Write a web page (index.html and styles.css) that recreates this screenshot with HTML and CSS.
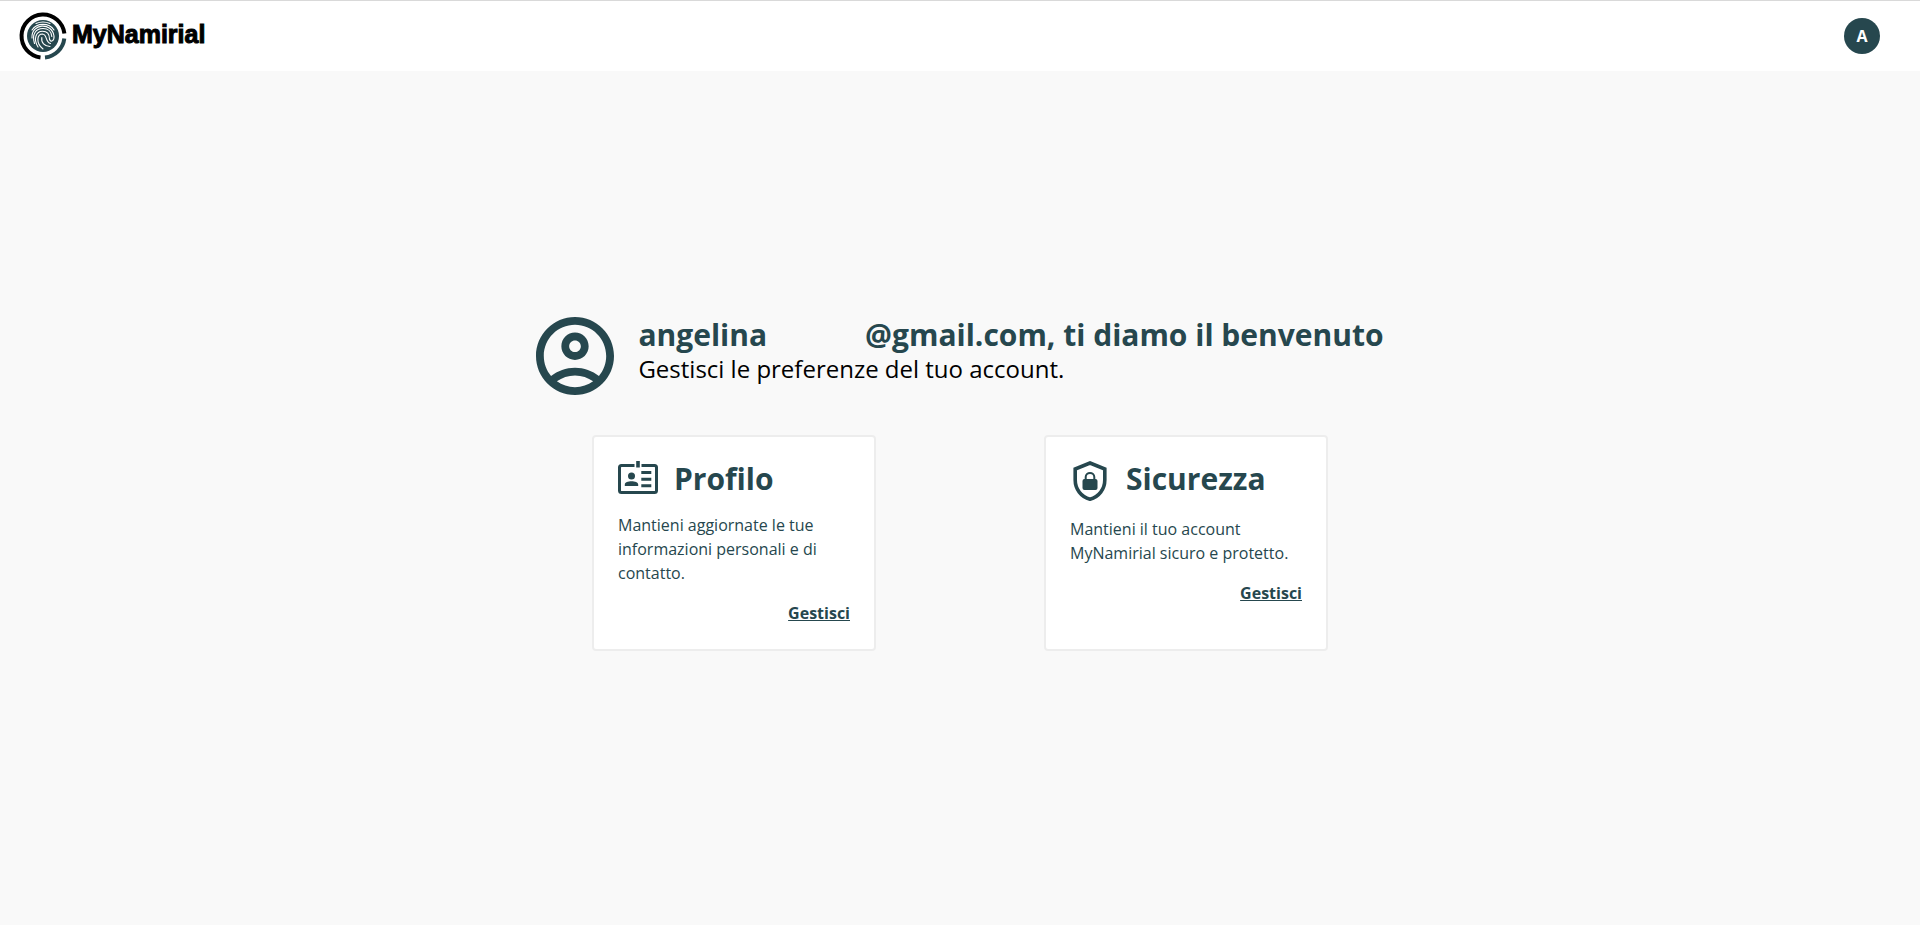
FILE: index.html
```
<!DOCTYPE html>
<html lang="it">
<head>
<meta charset="UTF-8">
<meta name="viewport" content="width=device-width, initial-scale=1">
<title>MyNamirial</title>
<link rel="stylesheet" href="styles.css">
</head>
<body>

<header class="header">
    <a class="logo" href="#">
        <svg class="logo-icon" viewBox="0 0 48 48" fill="none" aria-hidden="true">
            <path d="M21.5 45.4A21.5 21.5 0 1 1 45.4 21.6" stroke="#000" stroke-width="4"/>
            <path d="M45.3 26.5A21.5 21.5 0 0 1 26 45.4" stroke="#26474e" stroke-width="4"/>
            <circle cx="24" cy="24" r="16" fill="#26474e"/>
            <g stroke="#fff" stroke-width="1.1" stroke-linecap="round">
                <path d="M17 11.500Q24 8.500 31 11.500"/>
                <path d="M13 18C18 10.500 30 10.500 35 18"/>
                <path d="M13 26C12 11 33 10 35 24C35.500 29 31.500 31 30.500 27"/>
                <path d="M15.500 31.500C12.500 22 17 16.500 24 16.500C29 16.500 32.500 19.500 32.800 24.500"/>
                <path d="M19 35C14 27 17 19.200 23.500 19.200C28 19.200 30.500 22 30.500 27"/>
                <path d="M24 37C16.500 31 18 22 23.500 22C28.500 22.500 26 30 31.500 31.500"/>
                <path d="M22.800 25.500C22 30.500 25.500 34.500 31 34.500"/>
            </g>
        </svg>
        <span class="logo-text">MyNamirial</span>
    </a>
    <button class="avatar" type="button" aria-label="Account">A</button>
</header>

<main class="main">
    <section class="welcome">
        <svg class="welcome-icon" viewBox="2 2 20 20" fill="#26474e" aria-hidden="true">
            <path d="M12 2C6.480 2 2 6.480 2 12s4.480 10 10 10 10-4.480 10-10S17.520 2 12 2zM7.350 18.500C8.660 17.560 10.260 17 12 17s3.340.56 4.650 1.500C15.340 19.440 13.740 20 12 20s-3.340-.56-4.650-1.500zM18.140 17.120C16.450 15.800 14.320 15 12 15s-4.450.8-6.140 2.120C4.700 15.730 4 13.950 4 12c0-4.420 3.580-8 8-8s8 3.580 8 8c0 1.950-.7 3.730-1.860 5.120z"/>
            <path d="M12 6c-1.930 0-3.500 1.570-3.500 3.500S10.070 13 12 13s3.500-1.570 3.500-3.500S13.930 6 12 6zm0 5c-.83 0-1.500-.67-1.500-1.500S11.170 8 12 8s1.500.67 1.500 1.500S12.830 11 12 11z"/>
        </svg>
        <div class="welcome-text">
            <h1>angelina<span class="blank"></span>@gmail.com, ti diamo il benvenuto</h1>
            <p>Gestisci le preferenze del tuo account.</p>
        </div>
    </section>

    <section class="cards">
        <article class="card">
            <div class="card-title">
                <svg class="icon-badge" viewBox="0 0 40 33" aria-hidden="true">
                    <path d="M16.500 4.500H3.500Q1.500 4.500 1.500 6.500V29.500Q1.500 31.500 3.500 31.500H36.500Q38.500 31.500 38.500 29.500V6.500Q38.500 4.500 36.500 4.500H23.500" fill="none" stroke="#26474e" stroke-width="3"/>
                    <path d="M18.200 0h3.600v6.500h-3.600zM23.300 10h10v3h-10zM23.300 16.700h10v3h-10zM23.300 23.300h10v3h-10zM6.800 25V23.500C6.800 19.200 20.200 19.200 20.200 23.500V25z" fill="#26474e"/>
                    <circle cx="13.500" cy="15" r="3.500" fill="#26474e"/>
                </svg>
                <h2>Profilo</h2>
            </div>
            <p>Mantieni aggiornate le tue informazioni personali e di contatto.</p>
            <a class="manage" href="#">Gestisci</a>
        </article>

        <article class="card">
            <div class="card-title">
                <svg class="icon-shield" viewBox="0 0 40 40" aria-hidden="true">
                    <path d="M20 2L34.800 8V19C34.800 28 29 35.800 20 38.200C11 35.800 5.200 28 5.200 19V8Z" fill="none" stroke="#26474e" stroke-width="3.600"/>
                    <rect x="12.500" y="18" width="15" height="11" rx="2" fill="#26474e"/>
                    <path d="M15.700 19V16C15.700 10.700 24.300 10.700 24.300 16V19" fill="none" stroke="#26474e" stroke-width="2"/>
                </svg>
                <h2>Sicurezza</h2>
            </div>
            <p>Mantieni il tuo account MyNamirial sicuro e protetto.</p>
            <a class="manage" href="#">Gestisci</a>
        </article>
    </section>
</main>

</body>
</html>
```
FILE: styles.css
```
* {
    margin: 0;
    padding: 0;
    box-sizing: border-box;
}

body {
    display: flex;
    flex-direction: column;
    min-height: 100vh;
    font-family: "Open Sans", "Noto Sans", sans-serif;
    font-size: 16px;
    line-height: 24px;
    color: #26474e;
    background: #f9f9f9;
}

svg {
    display: block;
    flex: none;
}

.header {
    display: flex;
    justify-content: space-between;
    align-items: center;
    padding: 11px 40px 11px 19px;
    border-top: 1px solid #d9d9d9;
    background: #fff;
}

.logo {
    display: flex;
    align-items: center;
    gap: 5px;
    font: bold 25px/32px "Liberation Sans", Arial, sans-serif;
    color: #000;
    text-decoration: none;
}

.logo-icon {
    width: 48px;
    height: 48px;
}

.logo-text {
    padding-bottom: 4px;
    -webkit-text-stroke: 1px #000;
}

.avatar {
    width: 36px;
    height: 36px;
    border: 0;
    border-radius: 50%;
    font: bold 16px/24px "Open Sans", sans-serif;
    color: #fff;
    background: #26474e;
    cursor: pointer;
}

.main {
    flex: 1;
    display: flex;
    flex-direction: column;
    justify-content: center;
    align-items: center;
    gap: 40px;
    padding: 24px 24px 52px;
}

.welcome {
    display: flex;
    gap: 24px;
}

.welcome-icon {
    width: 78px;
    height: 78px;
}

.welcome-text h1 {
    font-size: 30px;
    line-height: 36px;
}

.welcome-text p {
    font-size: 24px;
    line-height: 32px;
    color: #000;
}

.blank {
    display: inline-block;
    width: 98px;
}

.cards {
    display: flex;
    flex-wrap: wrap;
    justify-content: center;
    gap: 24px 168px;
}

.card {
    display: flex;
    flex-direction: column;
    gap: 16px;
    width: 284px;
    padding: 24px;
    border: 2px solid #ededed;
    border-radius: 4px;
    background: #fff;
}

.card-title {
    display: flex;
    align-items: flex-start;
    gap: 16px;
}

.card-title h2 {
    font-size: 30px;
    line-height: 36px;
}

.icon-badge {
    width: 40px;
    height: 33px;
}

.icon-shield {
    width: 40px;
    height: 40px;
}

.manage {
    align-self: flex-end;
    font-weight: bold;
    color: #26474e;
}
```
